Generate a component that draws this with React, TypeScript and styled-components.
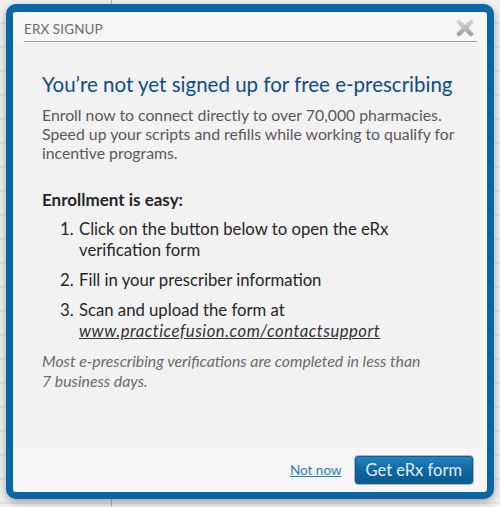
import React from "react";
import styled, { createGlobalStyle } from "styled-components";

const GlobalStyle = createGlobalStyle`
  html, body {
    margin: 0;
    padding: 0;
  }
  body {
    font-family: "Lato", "Open Sans", sans-serif;
  }
`;

const Page = styled.div`
  width: 500px;
  height: 507px;
  box-sizing: border-box;
  padding: 4px 6px 8px 6px;
  background:
    linear-gradient(to right, transparent 111px, #b9b9b9 111px, #b9b9b9 112px, transparent 112px),
    repeating-linear-gradient(to bottom, #f1f1f1 0px, #f1f1f1 22px, #e4e4e4 22px, #e4e4e4 24px);
`;

const Dialog = styled.div`
  width: 488px;
  height: 495px;
  box-sizing: border-box;
  border: 7px solid #0867a4;
  border-top-width: 8px;
  border-radius: 10px;
  background: #f6f6f6;
  box-shadow: 0 3px 8px rgba(0, 0, 0, 0.35);
  display: flex;
  flex-direction: column;
`;

const Header = styled.div`
  margin: 0 10px 0 11px;
  height: 29px;
  border-bottom: 1px solid #9c9c9c;
  display: flex;
  align-items: center;
  justify-content: space-between;
`;

const HeaderTitle = styled.span`
  font-size: 13.5px;
  color: #6b6b6b;
  letter-spacing: 0.1px;
  padding-top: 4px;
`;

const CloseButton = styled.button`
  border: none;
  background: none;
  padding: 0;
  margin: 2px 3px 0 0;
  width: 18px;
  height: 18px;
  cursor: pointer;
  display: flex;
`;

const Body = styled.div`
  margin: 2px 4px 0 0;
  padding: 28px 10px 0 29px;
  height: 403px;
  box-sizing: border-box;
  background: #f2f2f2;
  border-radius: 0 0 4px 0;
`;

const Title = styled.h1`
  margin: 0;
  font-size: 20.5px;
  font-weight: 400;
  color: #0d4c8c;
  line-height: 24px;
`;

const Intro = styled.p`
  margin: 9px 0 0 0;
  font-size: 15.8px;
  line-height: 19px;
  color: #595959;
`;

const StepsHeading = styled.h2`
  margin: 28px 0 0 0;
  font-size: 17px;
  font-weight: 700;
  color: #262626;
  line-height: 20px;
`;

const Steps = styled.ol`
  margin: 9px 0 0 0;
  padding: 0 0 0 36px;
  font-size: 16.7px;
  line-height: 21px;
  color: #262626;

  li {
    margin-bottom: 9px;
    padding-left: 1px;
  }
`;

const SupportLink = styled.a`
  color: #333;
  font-style: italic;
  text-decoration: underline;
  letter-spacing: 0.5px;
`;

const Note = styled.p`
  margin: 7px 0 0 0;
  font-size: 15.8px;
  line-height: 20px;
  font-style: italic;
  color: #6a6a6a;
`;

const Footer = styled.div`
  flex: 1;
  display: flex;
  align-items: center;
  justify-content: flex-end;
  gap: 12px;
  padding: 0 13px 0 0;
`;

const TextLink = styled.a`
  font-size: 13.5px;
  color: #2b7fbe;
  text-decoration: underline;
  cursor: pointer;
`;

const PrimaryButton = styled.button`
  height: 30px;
  padding: 0 11px;
  border: 1px solid #b4b4b4;
  border-radius: 4px;
  background: linear-gradient(to bottom, #2586c2 0%, #0f67a0 50%, #0a5890 100%);
  box-shadow: inset 0 0 0 1px #0b5d94;
  color: #e2eef7;
  font-family: "Lato", "Open Sans", sans-serif;
  font-size: 16.5px;
  cursor: pointer;
`;

const CloseIcon = () => (
  <svg width="18" height="18" viewBox="0 0 18 18">
    <defs>
      <linearGradient id="xg" x1="0" y1="0" x2="0" y2="1">
        <stop offset="0" stopColor="#d2d2d2" />
        <stop offset="1" stopColor="#a3a3a3" />
      </linearGradient>
    </defs>
    <path
      d="M3 3 L15 15 M15 3 L3 15"
      stroke="url(#xg)"
      strokeWidth="4.5"
      strokeLinecap="round"
    />
  </svg>
);

export default function App() {
  return (
    <Page>
      <GlobalStyle />
      <Dialog>
        <Header>
          <HeaderTitle>ERX SIGNUP</HeaderTitle>
          <CloseButton aria-label="Close">
            <CloseIcon />
          </CloseButton>
        </Header>
        <Body>
          <Title>You’re not yet signed up for free e-prescribing</Title>
          <Intro>
            Enroll now to connect directly to over 70,000 pharmacies.
            <br />
            Speed up your scripts and refills while working to qualify for
            <br />
            incentive programs.
          </Intro>
          <StepsHeading>Enrollment is easy:</StepsHeading>
          <Steps>
            <li>
              Click on the button below to open the eRx
              <br />
              verification form
            </li>
            <li>Fill in your prescriber information</li>
            <li>
              Scan and upload the form at
              <br />
              <SupportLink>www.practicefusion.com/contactsupport</SupportLink>
            </li>
          </Steps>
          <Note>
            Most e-prescribing verifications are completed in less than
            <br />7 business days.
          </Note>
        </Body>
        <Footer>
          <TextLink>Not now</TextLink>
          <PrimaryButton>Get eRx form</PrimaryButton>
        </Footer>
      </Dialog>
    </Page>
  );
}
